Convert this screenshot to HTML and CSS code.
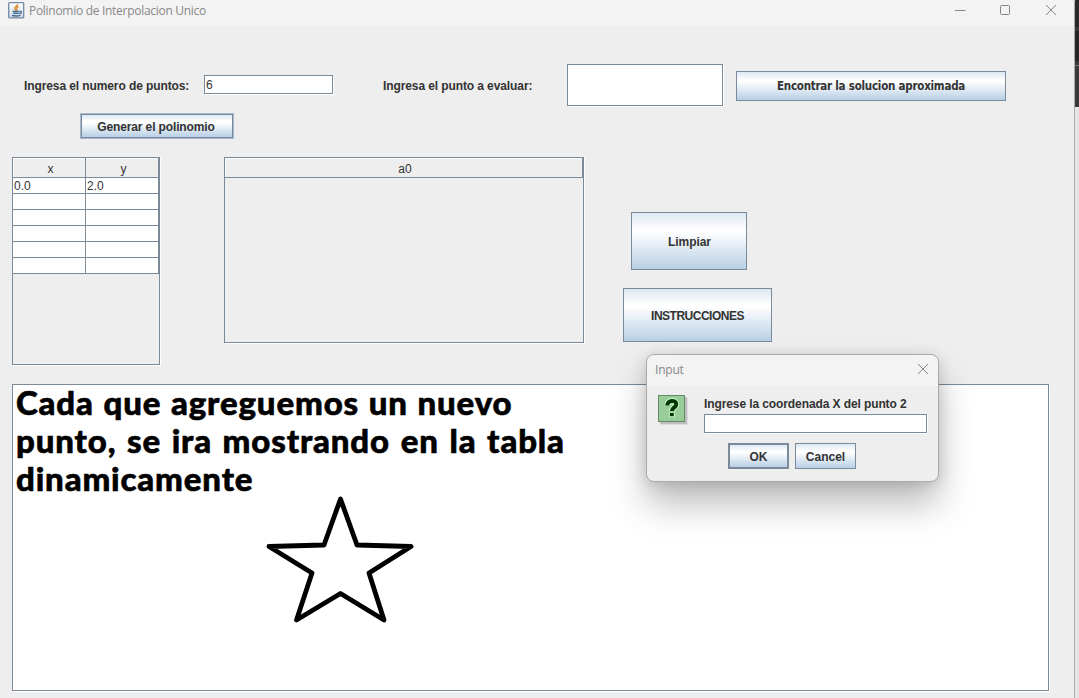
FILE: index.html
```html
<!DOCTYPE html>
<html lang="es">
<head>
<meta charset="utf-8">
<title>Polinomio de Interpolacion Unico</title>
<link rel="stylesheet" href="styles.css">
</head>
<body>
<div class="screen">
  <main class="window">
    <header class="titlebar">
      <svg class="java" width="17" height="17" viewBox="0 0 17 17">
        <defs><linearGradient id="jg" x1="0" y1="0" x2="0" y2="1"><stop offset="0" stop-color="#fff"/><stop offset="1" stop-color="#cfdbe6"/></linearGradient></defs>
        <rect x=".7" y=".7" width="15" height="15.2" rx="1" fill="url(#jg)" stroke="#6f8aa3" stroke-width="1.3"/>
        <path d="M9.500 2C10 4 6.200 4.700 6.700 6.500C6.900 7.300 7.600 7.800 7.700 8.600M10.700 4.500C8.200 5.500 8.100 6.500 8.800 7.300C9.300 8 8.600 8.600 8.600 8.600" fill="none" stroke="#e08a35" stroke-width="1.400"/>
        <path d="M4.500 9.500H11M5.200 11.300H10.600M4 13.500Q8 14.500 12.500 13.400M11.500 9.500Q14 9 13.300 10.600Q12.800 11.500 11 11.700" fill="none" stroke="#416a90" stroke-width="1.300"/>
      </svg>
      <span class="title">Polinomio de Interpolacion Unico</span>
      <svg class="controls" width="104" height="14" viewBox="0 0 104 14" fill="none" stroke="#858585">
        <path d="M0 7.500H10.500"/><rect x="45.500" y="2.500" width="9" height="9" rx="1"/><path d="M91 2L101 12M101 2L91 12"/>
      </svg>
    </header>
    <section class="form">
      <label class="label points">Ingresa el numero de puntos:</label>
      <div class="field count">6</div>
      <label class="label eval">Ingresa el punto a evaluar:</label>
      <div class="field target"></div>
      <button class="btn solve">Encontrar la solucion aproximada</button>
    </section>
    <button class="btn generate">Generar el polinomio</button>
    <section class="middle">
      <div class="pane coords">
        <div class="row head"><span>x</span><span>y</span></div>
        <div class="row"><span>0.0</span><span>2.0</span></div>
        <div class="row"><span></span><span></span></div>
        <div class="row"><span></span><span></span></div>
        <div class="row"><span></span><span></span></div>
        <div class="row"><span></span><span></span></div>
        <div class="row"><span></span><span></span></div>
      </div>
      <div class="pane coefs"><div class="row head"><span>a0</span></div></div>
      <div class="actions">
        <button class="btn clear">Limpiar</button>
        <button class="btn help">INSTRUCCIONES</button>
      </div>
    </section>
    <section class="notes">
      <p class="line one">Cada que agreguemos un nuevo</p>
      <p class="line two">punto, se ira mostrando en la tabla</p>
      <p class="line three">dinamicamente</p>
      <svg class="star" width="150" height="130" viewBox="265 495 150 130">
        <path d="M340.500 499L324 545L269 546.500L312 573L296.500 620L340.500 593.500L384 620L369 573L411 546.500L357 545Z" fill="none" stroke="#000" stroke-width="4.800" stroke-linejoin="round"/>
      </svg>
    </section>
  </main>
  <aside class="desktop"></aside>
  <div class="dialog">
    <header class="dialog-title"><span>Input</span>
      <svg width="12" height="12" viewBox="0 0 12 12" fill="none" stroke="#858585"><path d="M1 1L11 11M11 1L1 11"/></svg>
    </header>
    <div class="dialog-body">
      <svg class="question" width="32" height="32" viewBox="0 0 32 32">
        <rect x="3" y="3" width="27" height="27" fill="#ccc" opacity=".5"/><rect x="2" y="2" width="27" height="27" fill="#aaa" opacity=".6"/>
        <rect x=".5" y=".5" width="26" height="26" fill="#99cc99" stroke="#668866"/>
        <path d="M9.300 10.500C9.300 4.500 18.300 4.700 18.300 9.300C18.300 12.600 13.800 12.800 13.800 16M13.800 17.500V22" fill="none" stroke="#ccffcc" stroke-width="6"/>
        <path d="M9.300 10.500C9.300 4.500 18.300 4.700 18.300 9.300C18.300 12.600 13.800 12.800 13.800 16M13.800 18V21.300" fill="none" stroke="#003800" stroke-width="4"/>
      </svg>
      <div class="prompt"><label class="label ask">Ingrese la coordenada X del punto 2</label><div class="field answer"></div></div>
    </div>
    <div class="dialog-actions"><button class="btn ok">OK</button><button class="btn cancel">Cancel</button></div>
  </div>
</div>
</body>
</html>
```
FILE: styles.css
```css
* { box-sizing: border-box; }
body { margin: 0; font: 12px "Liberation Sans", Arial, sans-serif; color: #333; overflow: hidden; }
.screen { position: relative; display: flex; width: 1079px; height: 698px; background: #e5e5e5; }
.window { width: 1075px; height: 698px; background: #eee; border-right: 1px solid #aaa; flex: none; border-top-right-radius: 3px; }
.desktop { width: 4px; height: 107px; background: linear-gradient(#292929 27px, #383838 27px 31px, #252525 31px 61px, #383838 61px 65px, #777 65px 66px, #393939 66px); }
.titlebar { height: 26px; background: #f3f3f3; display: flex; padding: 2px 15px 0 8px; border-top-right-radius: 3px; }
.title { margin-left: 4px; font: 12px/18px "Open Sans", sans-serif; letter-spacing: -0.29px; color: #888; flex: 1; white-space: nowrap; }
.controls { margin-top: 1px; }
.label { font-weight: bold; white-space: nowrap; line-height: 14px; letter-spacing: -0.1px; }
.field { background: #fff; border: 1px solid #7a8a99; box-shadow: 1px 1px #fff; }
.btn { padding: 2px 0 0; font: bold 12px "Liberation Sans", Arial, sans-serif; color: #333; border: 1px solid #7a8a99; border-radius: 0; background: linear-gradient(#dde8f3, #fff 30%, #fff 34%, #b8cfe5); white-space: nowrap; }
.form { display: flex; align-items: center; margin: 38px 0 0 24px; height: 42px; }
.form .label { padding-top: 2px; }
.points { width: 180px; }
.count { width: 129px; height: 19px; padding-left: 1px; line-height: 19px; position: relative; top: -1px; }
.eval { width: 184px; margin-left: 50px; }
.target { width: 156px; height: 42px; }
.solve { width: 270px; height: 30px; margin: 2px 0 0 13px; padding: 0; font: bold 11.500px "DejaVu Sans Condensed", sans-serif; letter-spacing: -0.24px; }
.generate { display: block; margin: 7px 0 0 80px; width: 154px; height: 26px; border: 2px solid #7a8a99; outline: 1px solid #a3b8cc; outline-offset: -1px; padding-right: 2px; letter-spacing: -0.13px; }
.middle { display: flex; margin: 18px 0 0 12px; height: 208px; }
.pane { border: 1px solid #7a8a99; box-shadow: 1px 1px #fff; }
.coords { width: 148px; height: 208px; }
.coefs { width: 360px; height: 186px; margin-left: 64px; }
.row { display: flex; height: 16px; background: #fff; line-height: 16px; }
.row span { flex: 1; border: solid #7a8a99; border-width: 0 1px 1px 0; padding-left: 1px; }
.head { height: 20px; background: #eee; text-align: center; line-height: 23px; box-shadow: inset 1px 1px #fff; }
.head span { padding-left: 3px; }
.actions { display: flex; flex-direction: column; align-items: center; width: 149px; margin: 55px 0 0 39px; gap: 18px; }
.clear { width: 116px; height: 58px; position: relative; left: -9px; padding-left: 2px; letter-spacing: -0.05px; }
.help { width: 149px; height: 54px; letter-spacing: -0.5px; }
.notes { width: 1037px; height: 307px; margin: 19px 0 0 12px; padding-left: 3px; border: 1px solid #7a8a99; background: #fff; color: #000; box-shadow: 1px 1px #fff; }
.line { margin: 0; height: 38px; font: 900 33px/34px Lato, sans-serif; letter-spacing: 0.85px; white-space: nowrap; -webkit-text-stroke: 0.6px #000; }
.one { word-spacing: 1px; }
.two { word-spacing: 2px; }
.star { display: block; margin: -4px 0 0 249px; }
.dialog { position: absolute; left: 646px; top: 354px; width: 293px; height: 128px; background: #eee; border: 1px solid #aaa; border-radius: 8px; box-shadow: 0 22px 36px #0004, 0 2px 14px #0002; }
.dialog-title { height: 31px; display: flex; justify-content: space-between; padding: 8px 9px 0 8px; background: #f3f3f3; border-radius: 8px 8px 0 0; font: 12px/14px "Open Sans", sans-serif; letter-spacing: -0.2px; color: #888; }
.dialog-body { display: flex; padding: 9px 0 0 11px; height: 57px; }
.prompt { margin-left: 14px; padding-top: 2px; }
.ask { display: block; height: 17px; }
.answer { width: 223px; height: 19px; }
.dialog-actions { display: flex; gap: 6px; padding-left: 81px; }
.dialog-actions .btn { width: 61px; height: 26px; }
.dialog-actions .ok { border-width: 2px; }
```
